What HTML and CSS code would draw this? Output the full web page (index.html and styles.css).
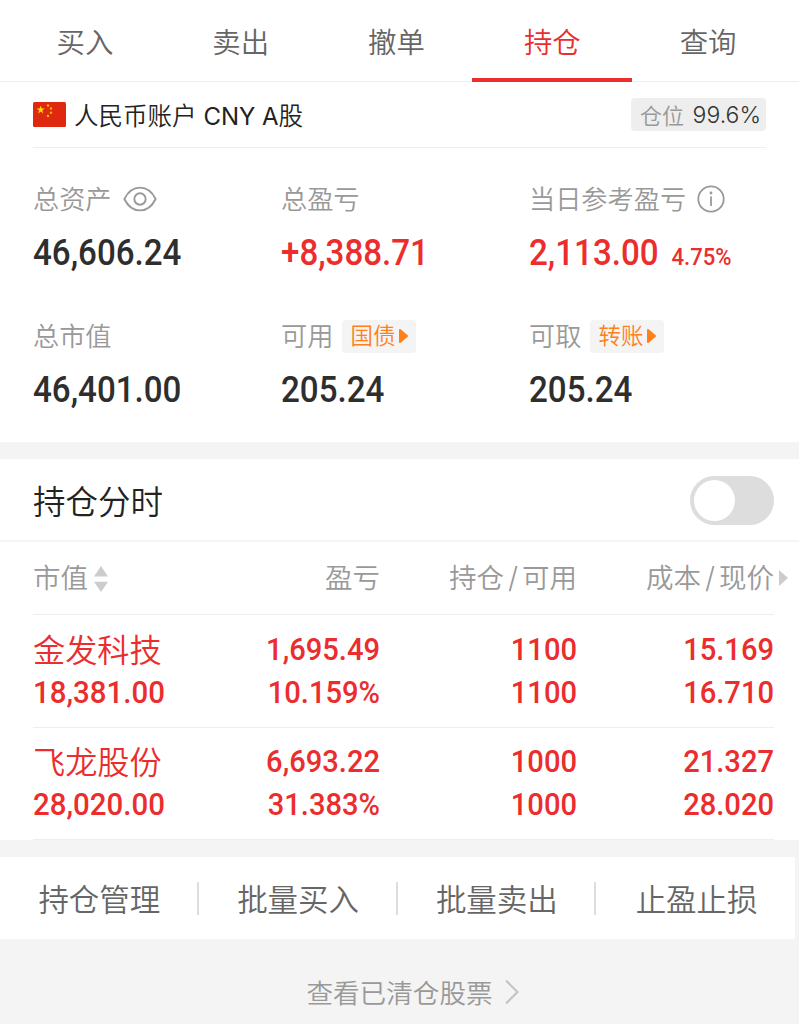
FILE: index.html
```html
<!DOCTYPE html>
<html lang="zh-CN">

<head>
    <meta charset="UTF-8">
    <title>持仓</title>
    <link rel="stylesheet" href="styles.css">
</head>

<body>
    <div class="tabs">
        <div class="tab">买入</div>
        <div class="tab">卖出</div>
        <div class="tab">撤单</div>
        <div class="tab active">持仓</div>
        <div class="tab">查询</div>
    </div>
    <div class="account">
        <svg class="flag" viewBox="0 0 33 25">
            <rect width="33" height="25" rx="1.5" fill="#de2910" />
            <path d="M7.700 3.400l1 3h3.200L9.300 8.300l1 3.100-2.600-1.900-2.600 1.900 1-3.100L3.500 6.400h3.200z" fill="#ffde00" />
            <g fill="#ffb400">
                <circle cx="15" cy="3.500" r="1.200" />
                <circle cx="18" cy="6.500" r="1.200" />
                <circle cx="18" cy="10.800" r="1.200" />
                <circle cx="15" cy="14" r="1.200" />
            </g>
        </svg>
        <div class="account-name">人民币账户 <span>CNY A</span>股</div>
        <div class="position"><span>仓位</span>99.6%</div>
    </div>
    <div class="stats">
        <div class="stat">
            <div class="stat-label"><span>总资产</span>
                <svg class="eye" viewBox="0 0 34 26" fill="none" stroke="#999" stroke-width="1.900">
                    <path d="M1.400 13C5 5.500 10.500 1.600 17 1.600S29 5.500 32.600 13C29 20.500 23.500 24.400 17 24.400S5 20.500 1.400 13z" />
                    <circle cx="17" cy="13" r="5.700" />
                </svg>
            </div>
            <div class="stat-value num">46,606.24</div>
        </div>
        <div class="stat">
            <div class="stat-label"><span>总盈亏</span></div>
            <div class="stat-value num red">+8,388.71</div>
        </div>
        <div class="stat">
            <div class="stat-label"><span>当日参考盈亏</span>
                <svg class="info" viewBox="0 0 28 28" fill="none" stroke="#999" stroke-width="1.800">
                    <circle cx="14" cy="14" r="12.700" />
                    <path d="M14 11.500V21" />
                    <circle cx="14" cy="8" r="1.400" fill="#999" stroke="none" />
                </svg>
            </div>
            <div class="stat-value num red">2,113.00<span class="percent">4.75%</span></div>
        </div>
        <div class="stat">
            <div class="stat-label"><span>总市值</span></div>
            <div class="stat-value num">46,401.00</div>
        </div>
        <div class="stat">
            <div class="stat-label"><span>可用</span>
                <div class="tag">国债<svg class="tag-arrow" viewBox="0 0 9 14"><path d="M1 1l7 6-7 6z" /></svg></div>
            </div>
            <div class="stat-value num">205.24</div>
        </div>
        <div class="stat">
            <div class="stat-label"><span>可取</span>
                <div class="tag">转账<svg class="tag-arrow" viewBox="0 0 9 14"><path d="M1 1l7 6-7 6z" /></svg></div>
            </div>
            <div class="stat-value num">205.24</div>
        </div>
    </div>
    <div class="gap"></div>
    <div class="chart-switch">
        <div>持仓分时</div>
        <div class="switch"></div>
    </div>
    <div class="holdings">
        <div class="row head">
            <div class="first">市值
                <svg class="sort" viewBox="0 0 14 26"><path d="M7 0l7 10.500H0zM0 15.800h14L7 26z" /></svg>
            </div>
            <div>盈亏</div>
            <div>持仓<i>/</i>可用</div>
            <div class="last">成本<i>/</i>现价<svg class="more" viewBox="0 0 9 16"><path d="M0 0l9 8-9 8z" /></svg></div>
        </div>
        <div class="row">
            <div class="first">
                <div class="name">金发科技</div>
                <div class="num">18,381.00</div>
            </div>
            <div class="num">1,695.49<br>10.159%</div>
            <div class="num">1100<br>1100</div>
            <div class="num">15.169<br>16.710</div>
        </div>
        <div class="row">
            <div class="first">
                <div class="name">飞龙股份</div>
                <div class="num">28,020.00</div>
            </div>
            <div class="num">6,693.22<br>31.383%</div>
            <div class="num">1000<br>1000</div>
            <div class="num">21.327<br>28.020</div>
        </div>
    </div>
    <div class="gap"></div>
    <div class="actions">
        <div class="action">持仓管理</div>
        <div class="action">批量买入</div>
        <div class="action">批量卖出</div>
        <div class="action">止盈止损</div>
    </div>
    <div class="cleared">查看已清仓股票
        <svg class="chevron" viewBox="0 0 14 26" fill="none" stroke="#c4c4c4" stroke-width="2.200"><path d="M1 1.500L12.500 13 1 24.500" /></svg>
    </div>
</body>

</html>
```
FILE: styles.css
```css
body {
    margin: 0;
    background: #F4F4F4;
    font-family: "Inter", "Noto Sans CJK SC", sans-serif;
    font-weight: 350;
    color: #222222;
    white-space: nowrap;
}

/* narrow digits */
.num {
    font-family: "Roboto", sans-serif;
    font-weight: 500;
    transform: scaleX(0.92);
    transform-origin: 0 50%;
}

.red {
    color: #EB2D2E;
}

.tabs {
    display: grid;
    grid-template-columns: repeat(5, 1fr);
    height: 81px;
    padding: 0 13px 0 7px;
    border-bottom: 1px solid #EEEEEE;
    background: #FFFFFF;
}

.tab {
    position: relative;
    height: 81px;
    font-size: 28.4px;
    line-height: 86px;
    text-align: center;
    color: #666666;
}

.tab.active {
    color: #EB2D2E;
}

.tab.active::after {
    content: "";
    position: absolute;
    left: -2px;
    right: -2px;
    bottom: -1px;
    height: 4px;
    background: #EB2D2E;
}

.account {
    display: flex;
    align-items: center;
    box-sizing: border-box;
    height: 66px;
    padding: 0 33px 1px;
    background: linear-gradient(#EEEEEE, #EEEEEE) 33px 100% / 733px 1px no-repeat #FFFFFF;
}

.flag {
    width: 33px;
    height: 25px;
}

.account-name {
    margin-left: 8px;
    font-size: 24.5px;
}

.account-name span {
    font-size: 24px;
    font-weight: 400;
}

.position {
    display: flex;
    align-items: center;
    justify-content: space-between;
    box-sizing: border-box;
    width: 135px;
    height: 33px;
    margin-left: auto;
    padding: 0 5px 0 9px;
    border-radius: 4px;
    background: #EEEEEE;
    font-size: 23px;
    color: #333333;
}

.position span {
    padding-bottom: 1px;
    font-size: 22px;
    color: #999999;
}

.stats {
    display: grid;
    grid-template-columns: repeat(3, 248px);
    grid-auto-rows: 137px;
    height: 261px;
    padding: 33px 0 0 33px;
    overflow: hidden;
    background: #FFFFFF;
}

.stat-label {
    display: flex;
    align-items: center;
    height: 36px;
    font-size: 26.2px;
    color: #999999;
}

.stat-label > span {
    padding-bottom: 2px;
}

.stat-value {
    margin-top: 13px;
    font-size: 36px;
    line-height: 46px;
    color: #2E2E2E;
}

.stat-value.red {
    color: #EB2D2E;
}

.percent {
    margin-left: 14px;
    font-size: 24px;
}

.eye {
    width: 34px;
    height: 26px;
    margin-left: 11px;
}

.info {
    width: 28px;
    height: 28px;
    margin-left: 11px;
}

.tag {
    display: flex;
    align-items: center;
    box-sizing: border-box;
    height: 33px;
    margin-left: 9px;
    padding: 0 8px;
    border-radius: 4px;
    background: #F4F4F4;
    font-size: 22.5px;
    line-height: 32px;
    color: #FF801A;
}

.tag-arrow {
    width: 9px;
    height: 14px;
    margin-left: 4px;
    fill: #FF801A;
    stroke: #FF801A;
    stroke-width: 2;
    stroke-linejoin: round;
}

.gap {
    height: 17px;
}

.chart-switch {
    display: flex;
    align-items: center;
    justify-content: space-between;
    height: 81px;
    padding: 0 25px 0 33px;
    border-bottom: 2px solid #F5F5F5;
    background: #FFFFFF;
    font-size: 32.5px;
}

.switch {
    box-sizing: border-box;
    width: 84px;
    height: 49px;
    margin-top: 2px;
    padding: 4px;
    border-radius: 25px;
    background: #DDDDDD;
}

.switch::before {
    content: "";
    display: block;
    width: 41px;
    height: 41px;
    border-radius: 50%;
    background: #FFFFFF;
}

.holdings {
    padding: 0 25px 0 33px;
    background: #FFFFFF;
}

.row {
    display: grid;
    grid-template-columns: 148px 199px 197px 197px;
    box-sizing: border-box;
    height: 113px;
    padding-top: 13px;
    border-bottom: 1px solid #EEEEEE;
    font-size: 32px;
    line-height: 43px;
    text-align: right;
    color: #EB2D2E;
}

.row:last-child {
    height: 112px;
    padding-top: 12px;
}

.row > .num {
    transform: scaleX(0.91);
    transform-origin: 100% 50%;
}

.row .first {
    text-align: left;
}

.name {
    height: 43px;
    font-size: 32.2px;
    line-height: 45px;
}

.row.head {
    height: 73px;
    padding: 0;
    font-size: 27.5px;
    line-height: 73px;
    color: #999999;
}

.head .first {
    display: flex;
    align-items: center;
}

.head i {
    margin: 0 4px;
    font-style: normal;
    font-size: 29px;
    line-height: 1;
}

.head .last {
    position: relative;
}

.sort {
    width: 14px;
    height: 26px;
    margin-left: 6px;
    fill: #CCCCCC;
}

.more {
    position: absolute;
    right: -14px;
    top: 28px;
    width: 9px;
    height: 16px;
    fill: #CCCCCC;
}

.actions {
    display: grid;
    grid-template-columns: repeat(4, 1fr);
    align-items: center;
    width: 795px;
    height: 82px;
    background: #FFFFFF;
}

.action {
    height: 33px;
    padding-left: 2px;
    font-size: 30.5px;
    line-height: 36px;
    text-align: center;
    color: #666666;
}

.action:not(:last-child) {
    border-right: 2px solid #DDDDDD;
}

.cleared {
    display: flex;
    align-items: center;
    justify-content: center;
    height: 85px;
    padding: 20px 0 0 26px;
    box-sizing: border-box;
    font-size: 26.6px;
    color: #999999;
}

.chevron {
    width: 14px;
    height: 26px;
    margin-left: 12px;
}
```
